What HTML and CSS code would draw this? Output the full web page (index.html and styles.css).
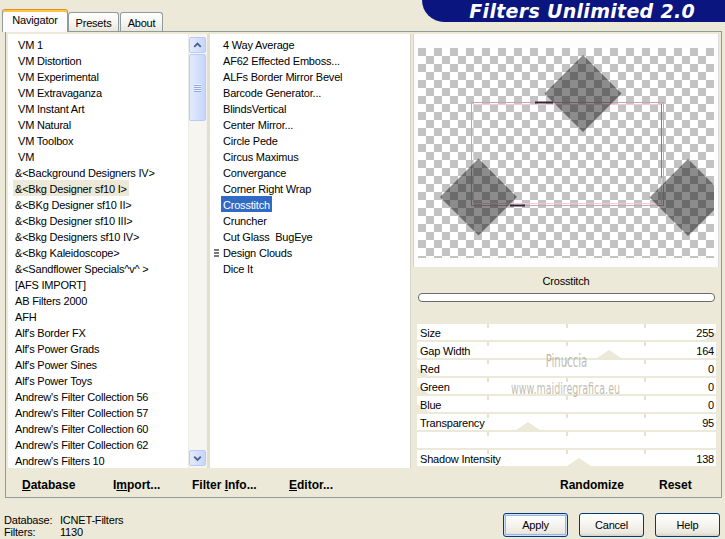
FILE: index.html
```html
<!DOCTYPE html>
<html>
<head>
<meta charset="utf-8">
<title>Filters Unlimited 2.0</title>
<link rel="stylesheet" href="styles.css">
</head>
<body>
<div class="app">
  <header class="top">
    <nav class="tabs">
      <div class="tab active nav">Navigator</div>
      <div class="tab presets">Presets</div>
      <div class="tab about">About</div>
    </nav>
    <div class="banner">Filters Unlimited 2.0</div>
  </header>

  <main class="panel">
    <div class="cols">
      <div class="catlist">
        <ul class="items">
          <li class="sp"><span>VM 1</span></li>
          <li class="sp"><span>VM Distortion</span></li>
          <li class="sp"><span>VM Experimental</span></li>
          <li class="sp"><span>VM Extravaganza</span></li>
          <li class="sp"><span>VM Instant Art</span></li>
          <li class="sp"><span>VM Natural</span></li>
          <li class="sp"><span>VM Toolbox</span></li>
          <li class="sp"><span>VM</span></li>
          <li><span>&amp;&lt;Background Designers IV&gt;</span></li>
          <li class="sel"><span>&amp;&lt;Bkg Designer sf10 I&gt;</span></li>
          <li><span>&amp;&lt;BKg Designer sf10 II&gt;</span></li>
          <li><span>&amp;&lt;Bkg Designer sf10 III&gt;</span></li>
          <li><span>&amp;&lt;Bkg Designers sf10 IV&gt;</span></li>
          <li><span>&amp;&lt;Bkg Kaleidoscope&gt;</span></li>
          <li><span>&amp;&lt;Sandflower Specials^v^ &gt;</span></li>
          <li><span>[AFS IMPORT]</span></li>
          <li><span>AB Filters 2000</span></li>
          <li><span>AFH</span></li>
          <li><span>Alf's Border FX</span></li>
          <li><span>Alf's Power Grads</span></li>
          <li><span>Alf's Power Sines</span></li>
          <li><span>Alf's Power Toys</span></li>
          <li><span>Andrew's Filter Collection 56</span></li>
          <li><span>Andrew's Filter Collection 57</span></li>
          <li><span>Andrew's Filter Collection 60</span></li>
          <li><span>Andrew's Filter Collection 62</span></li>
          <li><span>Andrew's Filters 10</span></li>
        </ul>
        <div class="vscroll">
          <div class="sbtn"><svg width="16" height="16" viewBox="0 0 16 16"><path d="M4.5 10 8 6.5 11.5 10" fill="none" stroke="#4d6185" stroke-width="2"/></svg></div>
          <div class="thumb"><span class="grip"></span></div>
          <div class="track"></div>
          <div class="sbtn"><svg width="16" height="16" viewBox="0 0 16 16"><path d="M4.5 6.5 8 10 11.5 6.5" fill="none" stroke="#4d6185" stroke-width="2"/></svg></div>
        </div>
      </div>

      <div class="splitter"></div>

      <ul class="filterlist">
        <li><i class="mark"></i><span>4 Way Average</span></li>
        <li><i class="mark"></i><span>AF62 Effected Emboss...</span></li>
        <li><i class="mark"></i><span>ALFs Border Mirror Bevel</span></li>
        <li><i class="mark"></i><span>Barcode Generator...</span></li>
        <li><i class="mark"></i><span>BlindsVertical</span></li>
        <li><i class="mark"></i><span>Center Mirror...</span></li>
        <li><i class="mark"></i><span>Circle Pede</span></li>
        <li><i class="mark"></i><span>Circus Maximus</span></li>
        <li><i class="mark"></i><span>Convergance</span></li>
        <li><i class="mark"></i><span>Corner Right Wrap</span></li>
        <li class="sel"><i class="mark"></i><span>Crosstitch</span></li>
        <li><i class="mark"></i><span>Cruncher</span></li>
        <li><i class="mark"></i><span>Cut Glass  BugEye</span></li>
        <li><i class="mark"><b class="grid"></b></i><span>Design Clouds</span></li>
        <li><i class="mark"></i><span>Dice It</span></li>
      </ul>

      <div class="gap"></div>

      <section class="params">
        <div class="pbox">
          <div class="preview">
            <svg width="296" height="210" viewBox="0 0 296 210">
              <rect x="53.5" y="54.5" width="192" height="103" fill="none" stroke="#cf9fb3"/>
              <rect x="55.5" y="56.5" width="188" height="99" fill="none" stroke="#e6cdd6"/>
              <line x1="243.5" y1="56" x2="243.5" y2="130" stroke="#9a7284"/>
              <line x1="117" y1="54.5" x2="135" y2="54.5" stroke="#3a2030" stroke-width="2"/>
              <line x1="92" y1="157.5" x2="107" y2="157.5" stroke="#3a2030" stroke-width="2"/>
              <polygon points="165,7 203.5,45.5 165,84 126.5,45.5" fill="rgba(0,0,0,0.45)"/>
              <polygon points="60.5,110.5 99,149 60.5,187.5 22,149" fill="rgba(0,0,0,0.45)"/>
              <polygon points="270,111 308.5,149.5 270,188 231.5,149.5" fill="rgba(0,0,0,0.45)"/>
            </svg>
          </div>
        </div>
        <div class="fname">Crosstitch</div>
        <div class="progress"></div>
        <div class="rows">
          <div class="row"><span>Size</span><span>255</span><i class="knob" style="left:299px"></i></div>
          <div class="row"><span>Gap Width</span><span>164</span><i class="knob" style="left:192px"></i></div>
          <div class="row"><span>Red</span><span>0</span><i class="knob" style="left:0px"></i></div>
          <div class="row"><span>Green</span><span>0</span><i class="knob" style="left:0px"></i></div>
          <div class="row"><span>Blue</span><span>0</span><i class="knob" style="left:0px"></i></div>
          <div class="row"><span>Transparency</span><span>95</span><i class="knob" style="left:111px"></i></div>
          <div class="row empty"><span></span><span></span></div>
          <div class="row"><span>Shadow Intensity</span><span>138</span><i class="knob" style="left:162px"></i></div>
          <div class="wm wm1"><span>Pinuccia</span></div>
          <div class="wm wm2"><span>www.maidiregrafica.eu</span></div>
        </div>
      </section>
    </div>

    <div class="actions">
      <span><u>D</u>atabase</span>
      <span>I<u>m</u>port...</span>
      <span>Filter <u>I</u>nfo...</span>
      <span><u>E</u>ditor...</span>
      <span>Randomize</span>
      <span>Reset</span>
    </div>
  </main>

  <footer class="status">
    <div class="info">
      <span>Database:</span><span>ICNET-Filters</span>
      <span>Filters:</span><span>1130</span>
    </div>
    <div class="buttons">
      <div class="btn def">Apply</div>
      <div class="btn">Cancel</div>
      <div class="btn">Help</div>
    </div>
  </footer>
</div>
</body>
</html>
```
FILE: styles.css
```css
* { box-sizing: border-box; margin: 0; padding: 0; }
html, body { width: 725px; height: 539px; overflow: hidden; }
body {
  background: #ece9d8;
  color: #000;
  font: 11px/16px "Liberation Sans", Arial, sans-serif;
  letter-spacing: -0.2px;
}
.app { width: 725px; height: 539px; }

/* header */
.top { height: 31px; display: flex; justify-content: space-between; align-items: flex-start; }
.tabs {
  display: flex; align-items: flex-end; align-self: flex-end;
  padding-left: 2px; height: 22px; position: relative; z-index: 2;
}
.tab {
  height: 19px; border: 1px solid #919b9c; border-bottom: none;
  border-radius: 3px 3px 0 0;
  background: linear-gradient(#ffffff, #f6f5f0 55%, #e9e6da);
  text-align: center; line-height: 20px;
}
.tab.nav {
  width: 66px; height: 23px; margin-bottom: -1px;
  background: #fcfcfe; border-top: 1px solid #e68b2c;
  box-shadow: inset 0 2px 0 #ffc83c;
  line-height: 21px;
}
.tab.presets { width: 51px; }
.tab.about { width: 43px; margin-left: 1px; }

.banner {
  width: 303px; height: 22px;
  background: #0a1580;
  border-bottom-left-radius: 22px 22px;
  color: #fff;
  font: italic bold 19px/22px "DejaVu Sans", sans-serif;
  letter-spacing: 0.3px;
  text-align: right; padding-right: 30px;
  white-space: nowrap;
}

/* main panel */
.panel {
  margin-left: 5px; width: 717px; height: 467px;
  border: 1px solid #919b9c; background: #ece9d8;
  display: flex; flex-direction: column;
}
.cols { display: flex; height: 436px; padding: 2px 2px 0 2px; }

.catlist { width: 198px; display: flex; background: #fff; }
.items { flex: 1; list-style: none; padding: 2px 0 0 5px; overflow: hidden; }
.items li, .filterlist li { height: 16px; white-space: pre; }
.items span, .filterlist span { display: inline-block; height: 16px; padding: 0 2px; line-height: 18px; overflow: hidden; }
.items .sp span { padding-left: 5px; }
.items .sel span { background: #ece9d8; }

.vscroll {
  width: 18px; display: flex; flex-direction: column;
  background: #f6f5f0; border-left: 1px solid #eeede5;
  padding: 3px 0 2px 0;
}
.sbtn, .thumb {
  width: 17px; height: 16px;
  border: 1px solid #b9cbf5; border-radius: 2px;
  background: linear-gradient(90deg, #e3ebfe, #c6d5fb);
  display: flex; align-items: center; justify-content: center;
}
.sbtn svg { display: block; }
.thumb { height: 67px; margin-top: 1px; }
.grip {
  display: block; width: 7px; height: 8px;
  background: repeating-linear-gradient(#eef3fe 0 1px, #8ea8e4 1px 2px);
}
.track { flex: 1; }

.splitter { width: 4px; background: #e2dfce; border-left: 1px solid #f4f3ee; }

.filterlist { width: 201px; background: #fff; list-style: none; padding-top: 2px; border-right: 1px solid #d8d4c5; }
.filterlist li { display: flex; padding-left: 4px; }
.mark { width: 7px; display: block; }
.grid {
  display: block; width: 5px; height: 9px; margin-top: 5px;
  background: repeating-linear-gradient(#7a7a7a 0 2px, transparent 2px 3px);
}
.filterlist .sel span { background: #316ac5; color: #fff; }

.gap { width: 2px; }

/* right pane */
.params { width: 306px; display: flex; flex-direction: column; }
.pbox {
  height: 234px; background: #fdfdfd;
  border-left: 1px solid #d6d2c3; border-right: 1px solid #dcdcdc;
  padding: 14px 0 0 4px;
}
.preview {
  width: 296px; height: 210px; overflow: hidden;
  background: repeating-conic-gradient(#ffffff 0 25%, #c3c3c3 0 50%) 0 0 / 16px 16px;
}
.preview svg { display: block; }
.fname { height: 22px; padding-top: 5px; line-height: 18px; text-align: center; }
.progress {
  height: 9px; margin: 4px 4px 0 5px;
  border: 1px solid #6b6b6b; border-radius: 4px; background: #fff;
}
.rows { margin-top: 22px; position: relative; }
.row {
  position: relative; height: 16px; margin: 0 3px 2px 4px;
  padding: 0 2px 0 3px;
  display: flex; justify-content: space-between;
  overflow: hidden; line-height: 18px;
  background:
    linear-gradient(90deg, transparent 70px, #e6e2d3 70px 72px, transparent 72px 149px, #e6e2d3 149px 151px, transparent 151px 227px, #e6e2d3 227px 229px, transparent 229px) 0 0 / 100% 4px no-repeat,
    #fff;
}
.row:last-of-type { margin-bottom: 0; }
.row span { position: relative; z-index: 1; }
.knob {
  position: absolute; bottom: 0; width: 0; height: 0;
  border-left: 12px solid transparent; border-right: 12px solid transparent;
  border-bottom: 8px solid #ece9d8;
  transform: translateX(-50%);
}
.wm {
  position: absolute; left: 0; right: 0; text-align: center;
  color: rgba(130, 120, 100, 0.5);
  font-family: "Liberation Sans Narrow", "DejaVu Sans Condensed", sans-serif;
  letter-spacing: 0; z-index: 3; pointer-events: none;
}
.wm span { display: inline-block; transform: scaleX(0.66); }
.wm1 { top: 27px; font-size: 17px; line-height: 20px; }
.wm2 { top: 56px; font-size: 16px; line-height: 18px; }

/* bottom action row */
.actions {
  height: 29px; padding: 5px 0 0 16px;
  display: grid; grid-template-columns: 91px 79px 97px 271px 99px auto;
  font-weight: bold; font-size: 12px; line-height: 24px; letter-spacing: 0;
  white-space: nowrap;
}

/* status */
.status { height: 41px; display: flex; justify-content: space-between; align-items: flex-start; }
.info { display: grid; grid-template-columns: 56px auto; padding: 16px 0 0 4px; line-height: 12px; }
.buttons { display: flex; gap: 11px; margin: 15px 5px 0 0; }
.btn {
  width: 65px; height: 24px;
  border: 1px solid #003c74; border-radius: 3px;
  background: linear-gradient(#ffffff, #f6f5f1 45%, #ebe8df 85%, #d8d3c8);
  text-align: center; line-height: 22px;
}
.btn.def { box-shadow: inset 0 0 0 1px #cfe0fb, inset 0 0 0 2px #97b5ea; }
```
